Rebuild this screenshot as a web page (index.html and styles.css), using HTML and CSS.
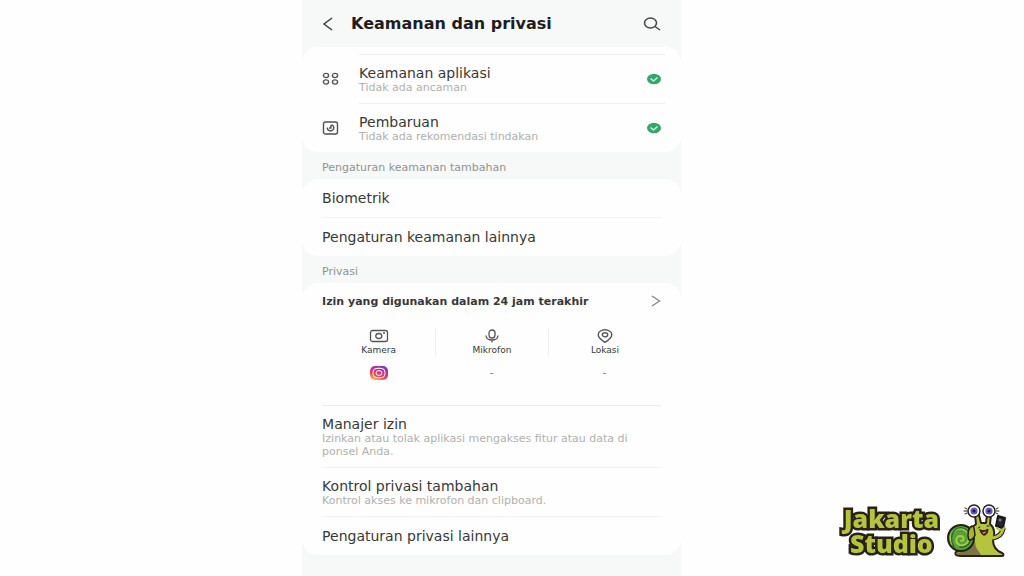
FILE: index.html
```
<!DOCTYPE html>
<html lang="id">
<head>
    <meta charset="UTF-8">
    <meta name="viewport" content="width=device-width, initial-scale=1.0">
    <title>Keamanan dan privasi</title>

    <link rel="stylesheet" href="styles.css">
</head>
<body>
    <main class="phone">
        <header class="topbar">
            <button type="button" class="icon-button" aria-label="Kembali">
                <svg width="12" height="14" viewBox="0 0 12 14" fill="none" stroke="#3c3c3c" stroke-width="1.5"><path d="M10 1 2 7l8 6"/></svg>
            </button>
            <h1>Keamanan dan privasi</h1>
            <button type="button" class="icon-button" aria-label="Cari">
                <svg width="18" height="14" viewBox="0 0 18 14" fill="none" stroke="#444" stroke-width="1.5"><ellipse cx="7.500" cy="6" rx="6" ry="5"/><path d="m12 9.500 5 3.500"/></svg>
            </button>
        </header>

        <section class="card status-card">
            <a href="#" class="status-row">
                <svg class="row-icon" width="17" height="14" viewBox="0 0 17 14" fill="none" stroke="#555" stroke-width="1.4"><ellipse cx="4" cy="3.5" rx="2.6" ry="2.1"/><ellipse cx="13" cy="3.5" rx="2.6" ry="2.1"/><ellipse cx="4" cy="10" rx="2.6" ry="2.1"/><ellipse cx="13" cy="10" rx="2.6" ry="2.1"/></svg>
                <span class="status-body">
                    <span class="row-text">
                        <span class="row-title">Keamanan aplikasi</span>
                        <span class="row-note">Tidak ada ancaman</span>
                    </span>
                    <svg width="16" height="12" viewBox="0 0 16 12"><ellipse cx="8" cy="6" rx="7" ry="5.3" fill="#36a56c"/><path d="m4.500 5.500 3 2.500 4-3.500" fill="none" stroke="#c4f5da" stroke-width="1.6"/></svg>
                </span>
            </a>
            <a href="#" class="status-row">
                <svg class="row-icon" width="17" height="14" viewBox="0 0 17 14" fill="none" stroke="#505050" stroke-width="1.4"><rect x="1.500" y="1" width="14" height="12" rx="2"/><path d="M5.300 6.500c0 4.300 6.500 4.300 6.500.3 0-1.600-1-2.600-2.500-2.900M9 4v3H7"/></svg>
                <span class="status-body">
                    <span class="row-text">
                        <span class="row-title">Pembaruan</span>
                        <span class="row-note">Tidak ada rekomendasi tindakan</span>
                    </span>
                    <svg width="16" height="12" viewBox="0 0 16 12"><ellipse cx="8" cy="6" rx="7" ry="5.3" fill="#36a56c"/><path d="m4.500 5.500 3 2.500 4-3.500" fill="none" stroke="#c4f5da" stroke-width="1.6"/></svg>
                </span>
            </a>
        </section>

        <h2>Pengaturan keamanan tambahan</h2>
        <section class="card">
            <a href="#" class="row row-title">Biometrik</a>
            <a href="#" class="row row-title">Pengaturan keamanan lainnya</a>
        </section>

        <h2>Privasi</h2>
        <section class="card">
            <a href="#" class="usage-link">
                Izin yang digunakan dalam 24 jam terakhir
                <svg width="10" height="12" viewBox="0 0 10 12" fill="none" stroke="#8a8a8a" stroke-width="1.4"><path d="m1 1 7.500 5L1 11"/></svg>
            </a>
            <div class="usage">
                <div class="usage-item">
                    <svg width="20" height="14" viewBox="0 0 20 14" fill="none" stroke="#555" stroke-width="1.3"><rect x="1.500" y="1.500" width="17" height="11" rx="2"/><ellipse cx="9.800" cy="7" rx="3" ry="2.500"/><path d="M14 4h2"/></svg>
                    <span>Kamera</span>
                </div>
                <div class="usage-item">
                    <svg width="16" height="14" viewBox="0 0 16 14" fill="none" stroke="#555" stroke-width="1.3"><rect x="5" y="1" width="6" height="8" rx="3"/><path d="M2 6.500c0 6 12 6 12 0M8 11v2.500"/></svg>
                    <span>Mikrofon</span>
                </div>
                <div class="usage-item">
                    <svg width="16" height="14" viewBox="0 0 16 14" fill="none" stroke="#555" stroke-width="1.4"><path d="M8 13.300C4 10.800 1.200 8.500 1.200 5.700 1.200 2.900 4.200.8 8 .8s6.800 2.100 6.800 4.900c0 2.800-2.800 5.100-6.800 7.600z"/><ellipse cx="8" cy="5.800" rx="2.700" ry="2.100"/></svg>
                    <span>Lokasi</span>
                </div>
            </div>
            <div class="usage-apps">
                <svg width="20" height="16" viewBox="0 0 20 16" role="img" aria-label="Instagram">
                    <defs>
                        <linearGradient id="insta" x1="0.2" y1="1" x2="0.7" y2="0">
                            <stop offset="0" stop-color="#ffc247"/>
                            <stop offset="0.35" stop-color="#ef4055"/>
                            <stop offset="0.65" stop-color="#c82d92"/>
                            <stop offset="1" stop-color="#8136bd"/>
                        </linearGradient>
                    </defs>
                    <rect x="1" y="1" width="18" height="14" rx="5" fill="url(#insta)"/>
                    <rect x="4" y="3.300" width="12" height="9.400" rx="4" fill="none" stroke="#fff" stroke-width="1"/>
                    <ellipse cx="10" cy="8" rx="3" ry="2.400" fill="none" stroke="#fff" stroke-width="1"/>
                </svg>
                <span>-</span>
                <span>-</span>
            </div>
            <a href="#" class="row row-detail">
                <span class="row-title">Manajer izin</span>
                <span class="row-note">Izinkan atau tolak aplikasi mengakses fitur atau data di ponsel Anda.</span>
            </a>
            <a href="#" class="row row-detail">
                <span class="row-title">Kontrol privasi tambahan</span>
                <span class="row-note">Kontrol akses ke mikrofon dan clipboard.</span>
            </a>
            <a href="#" class="row row-title">Pengaturan privasi lainnya</a>
        </section>
    </main>

    <!-- Watermark -->
    <aside class="brand">
        <div class="brand-name">
            <span>Jakarta</span>
            <span>Studio</span>
        </div>
        <svg width="62" height="56" viewBox="0 0 62 56" stroke-linejoin="round" stroke-linecap="round" aria-hidden="true">
            <path d="M46 35c5-1 9-4 10-9" fill="none" stroke="#292018" stroke-width="5"/>
            <path d="M9 49c7-2 13-6 17-13-2-6-2-12 3-15l-1-9h4l2 8h5l1-8h4l-1 9c5 4 5 11 3 16 0 7 4 11 9 13 2 1 2 3 0 3H15c-5 0-8-1-6-4z" fill="#b5c43d" stroke="#292018" stroke-width="2"/>
            <path d="M10 50c8-2 14-5 18-12 0 8 5 11 6 14H15c-3 0-5 0-5-2z" fill="#7a7447"/>
            <path d="M46 35c5-1 9-4 10-9" fill="none" stroke="#b5c43d" stroke-width="3"/>
            <path d="m51 13 7 2-2 10-7-2z" fill="#25252f" stroke="#181818" stroke-width="2"/>
            <circle cx="53" cy="17" r="1.5" fill="#777"/>
            <path d="M50 25c2 3 6 2 7 0" fill="none" stroke="#b5c43d" stroke-width="2"/>
            <ellipse cx="14" cy="35" rx="13" ry="13" fill="#56a037" stroke="#292018" stroke-width="2"/>
            <path d="M5 41C0 28 12 22 19 28c7 6 1 16-6 14-6-2-4-10 1-9 4 1 3 5 0 5" fill="none" stroke="#a4cb43" stroke-width="2"/>
            <path d="M7 44C-1 29 12 19 21 28c7 8 0 17-8 16" fill="none" stroke="#216829" stroke-width="1.3"/>
            <path d="M22 37c-2-6-1-12 3-14 3 0 2 5 3 9-1 3-3 5-6 5z" fill="#a6b438" stroke="#292018" stroke-width="1.5"/>
            <path d="m20 6-2-1m2 3-3 0m3 2-2 1m31-5 2-1m-2 3 3 0m-3 2 2 1" fill="none" stroke="#292018"/>
            <circle cx="27" cy="8" r="6" fill="#fff" stroke="#292018" stroke-width="1.5"/>
            <circle cx="42" cy="8" r="6" fill="#fff" stroke="#292018" stroke-width="1.5"/>
            <circle cx="27" cy="8" r="3.6" fill="#6659ca"/>
            <circle cx="42" cy="8" r="3.6" fill="#6659ca"/>
            <circle cx="27" cy="8" r="1.6" fill="#211c3e"/>
            <circle cx="42" cy="8" r="1.6" fill="#211c3e"/>
            <path d="M33 27c3 1 5 1 8-1 0 7-6 9-8 1z" fill="#55201c" stroke="#292018"/>
            <path d="M35 30c1-1 3-2 4-1-1 2-3 2-4 1z" fill="#e56b5f"/>
            <path d="m31 25 2-1m7-1 2 0" stroke="#292018"/>
        </svg>
    </aside>
</body>
</html>
```

FILE: styles.css
```
/* General styles */
* {
    box-sizing: border-box;
}

body {
    margin: 0;
    min-height: 100vh;
    display: flex;
    font-family: "DejaVu Sans", Verdana, sans-serif;
    background-color: #fdfefd;
    color: #383838;
}

a {
    color: inherit;
    text-decoration: none;
}

h1, h2 {
    margin: 0;
}

svg {
    display: block;
    flex-shrink: 0;
}

/* Settings screen */
.phone {
    width: 37vw;
    min-width: 340px;
    margin-left: 29.5vw;
    background-color: #f7f8f8;
}

.topbar {
    display: flex;
    align-items: center;
    height: 47px;
    padding: 0 20px;
}

.topbar h1 {
    flex: 1;
    padding-left: 17px;
    font-size: 16px;
    line-height: 20px;
    color: #1d1d1d;
}

.icon-button {
    padding: 0;
    border: none;
    background: none;
    cursor: pointer;
}

h2 {
    padding: 4px 20px 0;
    font-size: 11px;
    font-weight: normal;
    line-height: 23px;
    color: #929292;
}

/* Cards and rows */
.card {
    padding: 0 20px;
    border-radius: 16px;
    background-color: #fdfefd;
}

.status-card {
    padding: 7px 16px 0 20px;
}

.status-row {
    display: flex;
    align-items: center;
    gap: 20px;
}

.status-body {
    flex: 1;
    display: flex;
    align-items: center;
    justify-content: space-between;
    height: 49px;
    padding-right: 3px;
    border-top: 1px solid #efefef;
}

.row-text {
    display: flex;
    flex-direction: column;
}

.row-title {
    font-size: 14px;
    line-height: 16px;
}

.row-note {
    padding-right: 20px;
    font-size: 11px;
    line-height: 13px;
    color: #b0b0b0;
}

.row {
    display: block;
    padding: 11px 0;
}

.row + .row {
    border-top: 1px solid #f2f2f2;
}

.row-detail {
    display: flex;
    flex-direction: column;
    padding: 10px 0 9px;
}

/* Permission usage */
.usage-link {
    display: flex;
    align-items: center;
    justify-content: space-between;
    height: 36px;
    font-size: 11px;
    font-weight: bold;
    white-space: nowrap;
}

.usage, .usage-apps {
    display: grid;
    grid-template-columns: repeat(3, 1fr);
}

.usage {
    padding-top: 10px;
}

.usage-item {
    display: flex;
    flex-direction: column;
    align-items: center;
    gap: 2px;
    font-size: 9px;
    line-height: 11px;
}

.usage-item + .usage-item {
    border-left: 1px solid #efefef;
}

.usage-apps {
    align-items: center;
    justify-items: center;
    height: 50px;
    padding-bottom: 16px;
    border-bottom: 1px solid #ececec;
    font-size: 10px;
    color: #777;
}

/* Watermark */
.brand {
    position: fixed;
    right: 15px;
    bottom: 17px;
    display: flex;
    align-items: center;
    gap: 8px;
}

.brand-name {
    display: flex;
    flex-direction: column;
    font-family: "Noto Sans", sans-serif;
    font-size: 25px;
    font-weight: 900;
    line-height: 25px;
    text-align: center;
    color: #b5c43d;
    -webkit-text-stroke: 5px #292018;
    stroke-linejoin: round;
    paint-order: stroke fill;
}
```
